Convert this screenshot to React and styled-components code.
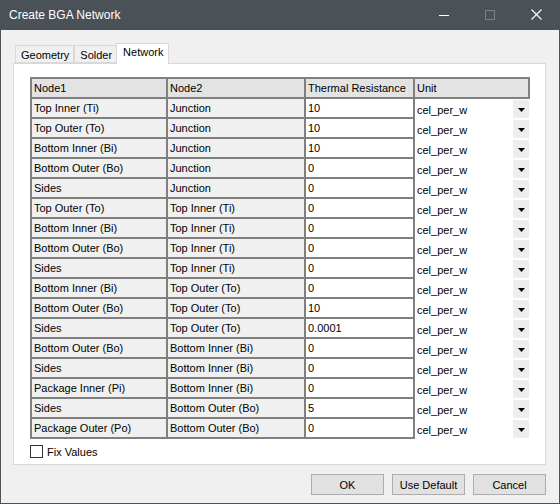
import React, { useState } from "react";
import styled, { createGlobalStyle } from "styled-components";

const GlobalStyle = createGlobalStyle`
  html, body {
    margin: 0;
    padding: 0;
    background: #f0f0f0;
  }
  * {
    box-sizing: border-box;
  }
`;

const rows = [
  ["Top Inner (Ti)", "Junction", "10"],
  ["Top Outer (To)", "Junction", "10"],
  ["Bottom Inner (Bi)", "Junction", "10"],
  ["Bottom Outer (Bo)", "Junction", "0"],
  ["Sides", "Junction", "0"],
  ["Top Outer (To)", "Top Inner (Ti)", "0"],
  ["Bottom Inner (Bi)", "Top Inner (Ti)", "0"],
  ["Bottom Outer (Bo)", "Top Inner (Ti)", "0"],
  ["Sides", "Top Inner (Ti)", "0"],
  ["Bottom Inner (Bi)", "Top Outer (To)", "0"],
  ["Bottom Outer (Bo)", "Top Outer (To)", "10"],
  ["Sides", "Top Outer (To)", "0.0001"],
  ["Bottom Outer (Bo)", "Bottom Inner (Bi)", "0"],
  ["Sides", "Bottom Inner (Bi)", "0"],
  ["Package Inner (Pi)", "Bottom Inner (Bi)", "0"],
  ["Sides", "Bottom Outer (Bo)", "5"],
  ["Package Outer (Po)", "Bottom Outer (Bo)", "0"],
];

function App() {
  const [tab, setTab] = useState("Network");
  const [fixed, setFixed] = useState(false);

  return (
    <>
      <GlobalStyle />
      <Window>
        <TitleBar>
          <Title>Create BGA Network</Title>
          <Controls>
            <CtrlButton>
              <svg width="10" height="10" viewBox="0 0 10 10">
                <line x1="0" y1="5.5" x2="10" y2="5.5" stroke="#fff" strokeWidth="1" />
              </svg>
            </CtrlButton>
            <CtrlButton>
              <svg width="10" height="10" viewBox="0 0 10 10">
                <rect x="0.5" y="0.5" width="9" height="9" fill="none" stroke="#7b8186" strokeWidth="1" />
              </svg>
            </CtrlButton>
            <CtrlButton>
              <svg width="11" height="11" viewBox="0 0 11 11">
                <path d="M0.5 0.5 L10.5 10.5 M10.5 0.5 L0.5 10.5" stroke="#fff" strokeWidth="1.1" />
              </svg>
            </CtrlButton>
          </Controls>
        </TitleBar>

        <Body>
          <TabStrip>
            {["Geometry", "Solder", "Network"].map((name) => (
              <Tab key={name} active={tab === name} onClick={() => setTab(name)}>
                {name}
              </Tab>
            ))}
          </TabStrip>

          <Panel>
            <Table>
              <HeadCell>Node1</HeadCell>
              <HeadCell>Node2</HeadCell>
              <HeadCell>Thermal Resistance</HeadCell>
              <HeadCell>Unit</HeadCell>
              {rows.map((r, i) => (
                <React.Fragment key={i}>
                  <NodeCell>{r[0]}</NodeCell>
                  <NodeCell>{r[1]}</NodeCell>
                  <ValueCell>{r[2]}</ValueCell>
                  <UnitCell>
                    <UnitText>cel_per_w</UnitText>
                    <DropButton>
                      <svg width="7" height="4" viewBox="0 0 7 4">
                        <path d="M0 0 H7 L3.5 4 Z" fill="#000" />
                      </svg>
                    </DropButton>
                  </UnitCell>
                </React.Fragment>
              ))}
            </Table>

            <CheckRow onClick={() => setFixed(!fixed)}>
              <CheckBox>{fixed ? "✓" : ""}</CheckBox>
              <span>Fix Values</span>
            </CheckRow>
          </Panel>

          <ButtonRow>
            <Button>OK</Button>
            <Button>Use Default</Button>
            <Button>Cancel</Button>
          </ButtonRow>
        </Body>
      </Window>
    </>
  );
}

const Window = styled.div`
  width: 560px;
  height: 504px;
  border: 1px solid #4a5157;
  display: flex;
  flex-direction: column;
  background: #f0f0f0;
  font-family: "Liberation Sans", Arial, sans-serif;
  font-size: 11px;
  color: #000;
`;

const TitleBar = styled.div`
  height: 29px;
  flex: none;
  background: #4a5157;
  display: flex;
  align-items: center;
`;

const Title = styled.div`
  flex: 1;
  padding-left: 8px;
  padding-bottom: 1px;
  color: #fff;
  font-size: 12px;
`;

const Controls = styled.div`
  display: flex;
  height: 100%;
`;

const CtrlButton = styled.div`
  width: 46px;
  height: 100%;
  display: flex;
  align-items: center;
  justify-content: center;
  padding-bottom: 2px;
`;

const Body = styled.div`
  flex: 1;
  display: flex;
  flex-direction: column;
  padding: 13px 13px 8px 12px;
`;

const TabStrip = styled.div`
  height: 20px;
  display: flex;
  align-items: flex-end;
  padding-left: 2px;
  position: relative;
  z-index: 1;
`;

const Tab = styled.div`
  height: ${(p) => (p.active ? "21px" : "18px")};
  margin-bottom: ${(p) => (p.active ? "-1px" : "0")};
  padding: ${(p) => (p.active ? "2px 5px 0 6px" : "3px 4px 0 5px")};
  background: ${(p) => (p.active ? "#fff" : "#f0f0f0")};
  border: 1px solid #d9d9d9;
  border-bottom: ${(p) => (p.active ? "none" : "1px solid #d9d9d9")};
  margin-left: ${(p) => (p.active ? "-1px" : "0")};
  cursor: pointer;
  & + & {
    border-left: ${(p) => (p.active ? "1px solid #d9d9d9" : "none")};
  }
`;

const Panel = styled.div`
  height: 402px;
  flex: none;
  background: #fff;
  border: 1px solid #d9d9d9;
  padding: 13px 0 0 16px;
`;

const Table = styled.div`
  display: grid;
  grid-template-columns: 136px 138px 109px 115px;
  grid-auto-rows: 20px;
  width: 500px;
  border-top: 2px solid #808080;
  border-left: 2px solid #808080;
`;

const Cell = styled.div`
  display: flex;
  align-items: center;
  padding: 0 0 1px 2px;
  white-space: nowrap;
  overflow: hidden;
  border-right: 2px solid #808080;
  border-bottom: 2px solid #808080;
`;

const HeadCell = styled(Cell)`
  background: #e3e3e3;
`;

const NodeCell = styled(Cell)`
  background: #f0f0f0;
`;

const ValueCell = styled(Cell)`
  background: #fff;
`;

const UnitCell = styled.div`
  display: flex;
  align-items: center;
  padding: 1px 1px 1px 2px;
  background: #fff;
`;

const UnitText = styled.span`
  flex: 1;
  padding-top: 2px;
`;

const DropButton = styled.div`
  width: 16px;
  height: 18px;
  background: #ededed;
  display: flex;
  align-items: center;
  justify-content: center;
  padding-top: 1px;
`;

const CheckRow = styled.div`
  display: flex;
  align-items: center;
  gap: 4px;
  margin-top: 6px;
  cursor: pointer;
`;

const CheckBox = styled.div`
  width: 13px;
  height: 13px;
  border: 1px solid #333;
  background: #fff;
  font-size: 10px;
  line-height: 11px;
  text-align: center;
`;

const ButtonRow = styled.div`
  display: flex;
  justify-content: flex-end;
  gap: 8px;
  margin-top: 9px;
`;

const Button = styled.button`
  width: 73px;
  height: 21px;
  background: #e1e1e1;
  border: 1px solid #adadad;
  font-family: "Liberation Sans", Arial, sans-serif;
  font-size: 11px;
  color: #000;
  padding: 0;
`;

export default App;
